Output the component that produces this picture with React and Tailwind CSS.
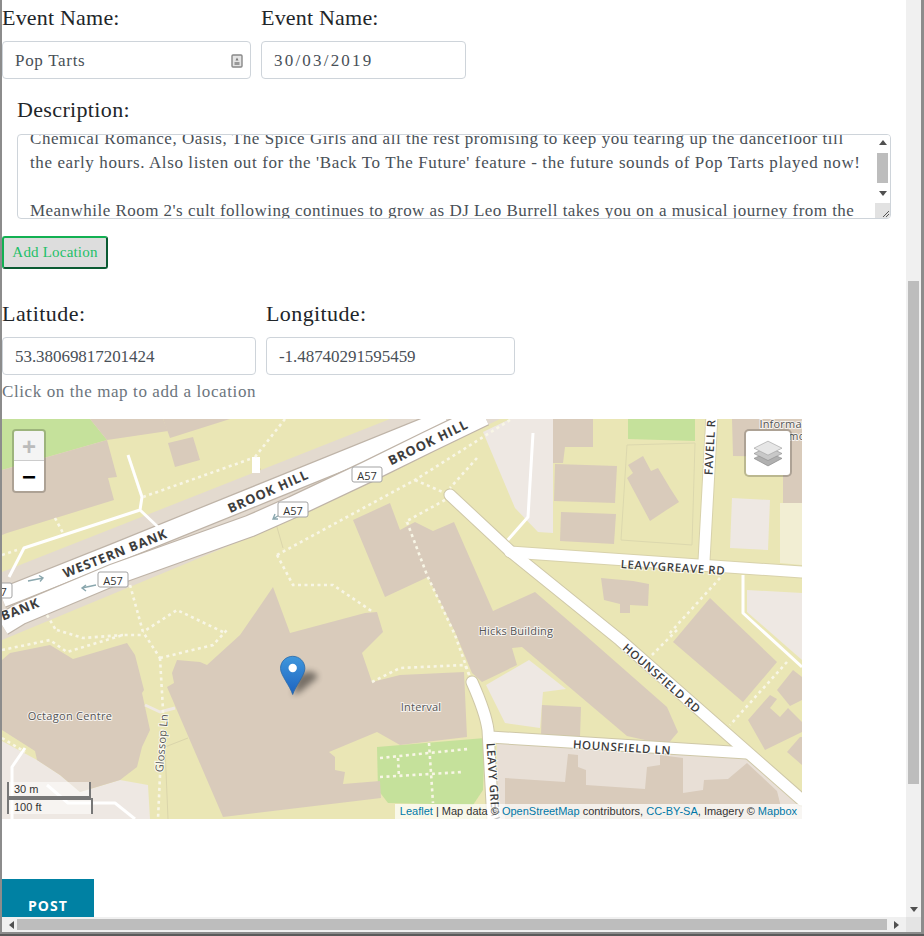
const serif = "font-['Liberation_Serif',serif]";

const dots = [
  "M143 497L253 458",
  "M255 457L285 419",
  "M55 518L63 533",
  "M2 555L17 550",
  "M2 650L50 640L67 652L123 635L143 635",
  "M57 630L83 638L123 635",
  "M47 615L57 632",
  "M223 632L177 610L143 632",
  "M130 585L143 632L160 658",
  "M160 658L213 645L227 630",
  "M160 658L163 710L158 819",
  "M277 555L293 585L333 585L373 612",
  "M277 555L415 480L510 420",
  "M372 682L400 668L465 665L470 677",
  "M407 522L427 575L455 635L470 677",
  "M477 458L450 488",
  "M415 480L445 493",
  "M445 500L405 522",
  "M380 758L468 749",
  "M380 777L463 772",
  "M429 743L433 803",
  "M398 758L399 777",
  "M720 578L668 635",
  "M677 630L652 655",
  "M787 662L730 725",
  "M2 738L25 752",
];

const buildings = [
  "2,470 107,440 117,477 108,478 114,500 7,533 2,535",
  "90,419 163,419 168,431 107,440",
  "163,419 230,419 170,438",
  "168,443 193,437 200,460 175,467",
  "353,520 390,503 400,530 415,522 433,531 454,522 493,611 535,592 585,635 667,707 678,732 667,745 627,736 522,647 512,648 517,665 482,682 472,673 455,632 428,577 385,597",
  "240,635 273,587 290,633 365,613 377,612 383,632 362,653 372,682 400,675 464,672 467,737 400,745 377,732 329,752 335,757 335,770 345,772 343,784 380,781 381,798 223,817 167,687 174,683 172,673 177,660 200,662 207,665",
  "2,660 10,653 50,645 73,659 127,643 135,655 144,690 142,693 150,730 142,747 137,767 120,780 80,792 60,775 37,760 35,751 2,730",
  "553,419 593,419 593,447 565,447 563,463 553,463",
  "555,464 617,466 615,503 554,501",
  "561,512 616,514 614,544 560,541",
  "628,465 643,456 651,471 658,468 670,488 679,502 665,511 650,521 627,478 633,473",
  "732,419 802,419 802,503 783,503 783,457 733,456",
  "601,578 633,581 649,584 648,606 630,605 630,613 620,613 620,604 604,600",
  "673,642 710,598 777,662 743,702",
  "542,705 581,707 580,737 541,735",
  "777,690 793,670 802,677 802,700 790,706",
  "748,720 770,695 777,699 770,708 780,717 788,708 802,722 802,732 765,750",
  "787,752 800,737 802,737 802,765",
  "505,778 565,782 568,754 578,755 578,767 586,770 586,785 645,789 647,767 660,765 660,755 683,758 683,793 703,790 704,780 728,779 747,763 777,791 780,803 780,819 505,819",
];

const pale = [
  "510,419 553,419 553,533 538,532 515,508 483,432",
  "732,498 770,500 768,550 730,548",
  "747,590 802,593 802,660 747,612",
  "2,741 37,760 60,775 80,792 120,780 148,785 150,819 2,819",
  "529,660 566,689 543,692 540,728 505,723 486,685",
];

const shields = [
  [367, 474],
  [293, 509],
  [113, 579],
  [-3, 590],
];

function MapLabel({ x, y, angle, children, weight = 700, size = 13, fill = "#3d3d3d", spacing = 0.8, anchor = "middle" }) {
  return (
    <text
      x={x}
      y={y}
      transform={`rotate(${angle} ${x} ${y})`}
      textAnchor={anchor}
      dominantBaseline="central"
      fontFamily="'Open Sans', sans-serif"
      fontSize={size}
      fontWeight={weight}
      letterSpacing={spacing}
      fill={fill}
      stroke="#ffffff"
      strokeWidth="2"
      strokeOpacity="0.75"
      paintOrder="stroke"
    >
      {children}
    </text>
  );
}

function StreetMap() {
  return (
    <svg viewBox="2 419 800 400" className="block w-[800px] h-[400px]">
      <defs>
        <linearGradient id="pin" x1="0" y1="0" x2="0" y2="1">
          <stop offset="0" stopColor="#3f97dc" />
          <stop offset="1" stopColor="#1d63c0" />
        </linearGradient>
        <filter id="pinShadow" x="-50%" y="-50%" width="200%" height="200%">
          <feGaussianBlur stdDeviation="3" />
        </filter>
      </defs>
      <rect x="2" y="419" width="800" height="400" fill="#eae6b5" />
      <polygon points="2,419 90,419 107,440 2,470" fill="#c5e19b" />
      <polygon points="628,419 695,419 695,441 628,439" fill="#c5e19b" />
      <polygon points="377,747 485,738 483,790 473,805 388,803 378,790" fill="#c5e19b" />
      <polygon points="780,503 802,503 802,565 780,563" fill="#f2eed3" />
      <polygon points="497,743 748,758 802,800 802,819 497,819" fill="#e8dfd6" />
      {pale.map((p) => (
        <polygon key={p} points={p} fill="#eee8e3" />
      ))}
      {buildings.map((p) => (
        <polygon key={p} points={p} fill="#d9cbbb" />
      ))}
      <path d="M627 445L695 443L692 545L621 540Z" fill="none" stroke="#dcd8ae" />
      <path d="M260 468L283 548M165 747L188 738M165 747L168 819" fill="none" stroke="#dad5ab" />

      {/* dual carriageway */}
      <polygon points="2,572 390,419 500,419 296,517 250,537 2,640" fill="#e3dacf" />
      <g fill="none" strokeLinejoin="round">
        <path d="M2 598L115 553L268 491L446 419" stroke="#bfb4a8" strokeWidth="21" />
        <path d="M2 598L115 553L268 491L446 419" stroke="#ffffff" strokeWidth="18.5" />
        <path d="M2 625L20 614L113 575L250 526L293 507L367 472L428 442L484 415" stroke="#bfb4a8" strokeWidth="23" />
        <path d="M2 625L20 614L113 575L250 526L293 507L367 472L428 442L484 415" stroke="#ffffff" strokeWidth="20.5" />
      </g>

      {/* minor roads */}
      <g fill="none" stroke="#ffffff" strokeLinejoin="round">
        <path d="M128 455L142 497L140 510L24 548L9 577M140 510L158 527" strokeWidth="3" />
        <path d="M533 433L528 517L506 542" strokeWidth="3" />
        <path d="M743 575L743 613L802 667" strokeWidth="3" />
        <path d="M25 748L12 767L12 819M47 785L68 803L115 803L135 819" strokeWidth="3" />
        <path d="M145 705L160 712L175 708" strokeWidth="3" stroke="#efe9e2" />
        <path d="M256 457L256 473" strokeWidth="8" />
      </g>
      <g fill="none" strokeLinecap="round" strokeLinejoin="round">
        <path d="M712 415L704 561" stroke="#d8d2ab" strokeWidth="13" />
        <path d="M510 552L802 572" stroke="#d8d2ab" strokeWidth="13" />
        <path d="M450 495L510 551L620 640L802 800" stroke="#cfc8a8" strokeWidth="13" />
        <path d="M472 682C480 700 486 715 488 730L493 822" stroke="#cfc8a8" strokeWidth="13" />
        <path d="M490 737L747 753" stroke="#cfc8a8" strokeWidth="13" />
        <path d="M712 415L704 561" stroke="#ffffff" strokeWidth="11" />
        <path d="M510 552L802 572" stroke="#ffffff" strokeWidth="11" />
        <path d="M450 495L510 551L620 640L802 800" stroke="#ffffff" strokeWidth="11" />
        <path d="M472 682C480 700 486 715 488 730L493 822" stroke="#ffffff" strokeWidth="11" />
        <path d="M490 737L747 753" stroke="#ffffff" strokeWidth="11" />
      </g>

      <g fill="none" stroke="#f8f6e6" strokeWidth="2.6" strokeDasharray="3 3.5">
        {dots.map((d) => (
          <path key={d} d={d} />
        ))}
      </g>

      {/* one-way arrows */}
      <g fill="none" stroke="#8aa7ae" strokeWidth="1.4">
        <path d="M28 581L43 578M39 575.5L43 578L40 581.5" />
        <path d="M96 585L82 588M86 585L82 588L86 591" />
        <path d="M281 514L273 519M275 514L273 519L278 519" />
      </g>

      {shields.map(([x, y]) => (
        <g key={x}>
          <rect x={x - 15} y={y - 7} width="30" height="15" rx="2" fill="#ffffff" stroke="#a3a3a3" />
          <text x={x} y={y + 1} textAnchor="middle" dominantBaseline="central" fontFamily="'Open Sans', sans-serif" fontSize="11" fill="#333333">
            A57
          </text>
        </g>
      ))}

      <MapLabel x={115} y={553} angle={-21.5}>WESTERN BANK</MapLabel>
      <MapLabel x={268} y={491} angle={-24}>BROOK HILL</MapLabel>
      <MapLabel x={428} y={442} angle={-26}>BROOK HILL</MapLabel>
      <MapLabel x={20} y={609} angle={-21}>BANK</MapLabel>
      <MapLabel x={708} y={475} angle={-87} anchor="start" size={11.5} spacing={0.7} weight={600}>FAVELL RD</MapLabel>
      <MapLabel x={673} y={567} angle={3.7} size={11.5} spacing={0.6} weight={600}>LEAVYGREAVE RD</MapLabel>
      <MapLabel x={662} y={678} angle={41} size={11.5} spacing={0.6} weight={600}>HOUNSFIELD RD</MapLabel>
      <MapLabel x={622} y={747} angle={3.7} size={11.5} spacing={0.6} weight={600}>HOUNSFIELD LN</MapLabel>
      <MapLabel x={491} y={743} angle={86} anchor="start" size={11.5} spacing={0.7} weight={600}>LEAVY GREAVE</MapLabel>
      <MapLabel x={161} y={743} angle={-85} weight={400} size={11} spacing={0.2} fill="#555555">Glossop Ln</MapLabel>
      <MapLabel x={70} y={715} angle={0} weight={400} size={11} spacing={0.3} fill="#555555">Octagon Centre</MapLabel>
      <MapLabel x={516} y={630} angle={0} weight={400} size={11} spacing={0.2} fill="#555555">Hicks Building</MapLabel>
      <MapLabel x={421} y={706} angle={0} weight={400} size={11} spacing={0.2} fill="#555555">Interval</MapLabel>
      <MapLabel x={791} y={423} angle={0} weight={400} size={11} spacing={0.2} fill="#555555">Information</MapLabel>
      <MapLabel x={791} y={435} angle={0} weight={400} size={11} spacing={0.2} fill="#555555">Commons</MapLabel>

      {/* marker */}
      <path d="M293 695L300 692L317 678C319 674 312 670 305 672L297 675Z" fill="#000000" opacity="0.45" filter="url(#pinShadow)" />
      <path
        d="M292.7 694.5C290 686 280.5 675 280.5 668.5C280.5 661.5 286 656.3 292.7 656.3C299.4 656.3 304.9 661.5 304.9 668.5C304.9 675 295.4 686 292.7 694.5Z"
        fill="url(#pin)"
        stroke="#2a6aa8"
        strokeWidth="0.8"
      />
      <circle cx="292.7" cy="668" r="4.2" fill="#ffffff" />
    </svg>
  );
}

function Field({ className, children }) {
  return (
    <div className={`h-[38px] flex items-center justify-between pl-[12px] pr-[5px] pt-[1px] border border-[#ced4da] rounded-[4px] bg-white text-[17px] text-[#495057] ${className}`}>
      {children}
    </div>
  );
}

function Label({ className = "", children }) {
  return <div className={`text-[22px] leading-[26px] tracking-[0.2px] text-[#212529] ${className}`}>{children}</div>;
}

export default function App() {
  return (
    <div className={`h-[936px] w-[924px] flex flex-col overflow-hidden bg-white ${serif}`}>
      <div className="flex flex-1 min-h-0">
        <div className="w-[2px] bg-[#8c8c8c]" />
        <main className="w-[904px] overflow-hidden">
          <div className="flex gap-[10px] pt-[5px]">
            <div className="w-[249px]">
              <Label>Event Name:</Label>
              <Field className="mt-[10px]">
                <span className="tracking-[0.7px]">Pop Tarts</span>
                <svg width="12" height="14" viewBox="0 0 12 14" className="mr-[2px]">
                  <rect x="1" y="1" width="10" height="12" rx="1" fill="#e4e4e4" stroke="#888888" strokeWidth="1.4" />
                  <path d="M6 3.5L7.5 6.5H4.5Z" fill="#777777" />
                  <rect x="3.5" y="8" width="5" height="3" fill="#999999" />
                </svg>
              </Field>
            </div>
            <div className="w-[205px]">
              <Label>Event Name:</Label>
              <Field className="mt-[10px]">
                <span className="tracking-[2.2px]">30/03/2019</span>
              </Field>
            </div>
          </div>

          <div className="pl-[15px] mt-[18px]">
            <Label className="tracking-[0.35px]">Description:</Label>
            <div className="mt-[11px] w-[874px] h-[85px] flex border border-[#ced4da] rounded-[4px] overflow-hidden">
              <div className="flex-1 min-w-0 pl-[12px] overflow-hidden text-[17px] leading-[24px] tracking-[0.61px] text-[#495057] whitespace-nowrap">
                <div className="-mt-[8px] tracking-[0.55px]">Chemical Romance, Oasis, The Spice Girls and all the rest promising to keep you tearing up the dancefloor till</div>
                <div>the early hours. Also listen out for the 'Back To The Future' feature - the future sounds of Pop Tarts played now!</div>
                <div className="h-[24px]" />
                <div className="tracking-[0.47px]">Meanwhile Room 2's cult following continues to grow as DJ Leo Burrell takes you on a musical journey from the</div>
              </div>
              <div className="w-[15px] flex flex-col items-center bg-white">
                <div className="h-[15px] flex items-center justify-center text-[#505050]">
                  <svg width="8" height="5" viewBox="0 0 8 5"><path d="M4 0L8 5H0Z" fill="currentColor" /></svg>
                </div>
                <div className="w-[11px] h-[30px] bg-[#bdbdbd] mt-[3px]" />
                <div className="flex-1 flex items-center justify-center text-[#505050]">
                  <svg width="8" height="5" viewBox="0 0 8 5"><path d="M4 5L8 0H0Z" fill="currentColor" /></svg>
                </div>
                <div className="w-[15px] h-[15px] bg-[#e2e2e2] flex items-end justify-end">
                  <svg width="10" height="10" viewBox="0 0 10 10"><path d="M9 3L3 9M9 6L6 9" stroke="#555555" /></svg>
                </div>
              </div>
            </div>
          </div>

          <button className="block mt-[17px] w-[106px] h-[33px] border-2 border-[#12b052] border-r-[#0a5a32] border-b-[#0a5a32] rounded-[3px] bg-[#dddddd] text-[15px] tracking-[0.2px] text-[#22c068]">
            Add Location
          </button>

          <div className="flex gap-[10px] mt-[32px]">
            <div className="w-[254px]">
              <Label className="tracking-[0.45px]">Latitude:</Label>
              <Field className="mt-[10px]">
                <span className="tracking-[-0.05px]">53.38069817201424</span>
              </Field>
            </div>
            <div className="w-[249px]">
              <Label className="tracking-[0.4px]">Longitude:</Label>
              <Field className="mt-[10px]">
                <span className="tracking-[-0.05px]">-1.48740291595459</span>
              </Field>
            </div>
          </div>
          <p className="mt-[5px] text-[17px] leading-[24px] tracking-[0.6px] text-[#6c757d]">Click on the map to add a location</p>

          <div className="relative w-[800px] h-[400px] mt-[15px] overflow-hidden">
            <StreetMap />
            <div className="absolute left-[10px] top-[10px] w-[34px] border-2 border-black/20 rounded-[4px] font-['Liberation_Sans',sans-serif] font-bold text-[24px] leading-[31px] text-center bg-clip-padding">
              <div className="h-[30px] bg-[#f4f4f4] text-[#bbbbbb] border-b border-[#cccccc] rounded-t-[2px]">+</div>
              <div className="h-[30px] bg-white text-black rounded-b-[2px]">−</div>
            </div>
            <div className="absolute left-[742px] top-[10px] w-[48px] h-[48px] border-2 border-black/20 rounded-[5px] bg-white bg-clip-padding flex items-center justify-center">
              <svg width="28" height="28" viewBox="0 0 26 26">
                <path d="M13 12L26 18L13 25L0 18Z" fill="#b0b0b0" stroke="#888888" strokeWidth="0.6" />
                <path d="M13 7L26 13.5L13 20L0 13.5Z" fill="#c8c8c8" stroke="#8f8f8f" strokeWidth="0.6" />
                <path d="M13 2L26 8.5L13 15L0 8.5Z" fill="#e6e6e6" stroke="#a0a0a0" strokeWidth="0.6" />
              </svg>
            </div>
            <div className="absolute left-[5px] bottom-[5px] font-['Liberation_Sans',sans-serif] text-[11px] leading-[14px] text-[#333333]">
              <div className="w-[84px] h-[16px] border-2 border-t-0 border-[#777777] bg-white/50 pl-[5px]">30 m</div>
              <div className="w-[86px] h-[16px] border-2 border-b-0 border-[#777777] bg-white/50 pl-[5px]">100 ft</div>
            </div>
            <div className="absolute right-0 bottom-0 h-[15px] px-[5px] bg-white/70 font-['Liberation_Sans',sans-serif] text-[11px] leading-[15px] text-[#333333] whitespace-nowrap">
              <span className="text-[#0078a8]">Leaflet</span> | Map data © <span className="text-[#0078a8]">OpenStreetMap</span> contributors, <span className="text-[#0078a8]">CC-BY-SA</span>, Imagery © <span className="text-[#0078a8]">Mapbox</span>
            </div>
          </div>

          <button className="block mt-[60px] w-[92px] h-[60px] pb-[6px] bg-[#0081a3] font-['Open_Sans',sans-serif] font-bold text-[14px] leading-none tracking-[1.1px] text-white">
            POST
          </button>
        </main>

        {/* page scrollbar */}
        <div className="w-[15px] flex flex-col items-center bg-[#f0f0f0]">
          <div className="h-[281px] w-full" />
          <div className="w-[11px] h-[503px] bg-[#bdbdbd]" />
          <div className="flex-1 w-full flex items-end justify-center pb-[5px] text-[#505050]">
            <svg width="8" height="5" viewBox="0 0 8 5"><path d="M4 5L8 0H0Z" fill="currentColor" /></svg>
          </div>
        </div>
        <div className="w-[3px] bg-[#8c8c8c]" />
      </div>

      <div className="flex h-[15px]">
        <div className="w-[2px] bg-[#8c8c8c]" />
        <div className="w-[904px] flex items-center bg-[#f0f0f0]">
          <div className="w-[15px] flex justify-end pr-[3px] text-[#505050]">
            <svg width="5" height="8" viewBox="0 0 5 8"><path d="M0 4L5 0V8Z" fill="currentColor" /></svg>
          </div>
          <div className="w-[870px] h-[11px] bg-[#bdbdbd]" />
          <div className="flex-1 flex justify-center text-[#505050]">
            <svg width="5" height="8" viewBox="0 0 5 8"><path d="M5 4L0 0V8Z" fill="currentColor" /></svg>
          </div>
        </div>
        <div className="w-[15px] bg-[#e4e4e4]" />
        <div className="w-[3px] bg-[#8c8c8c]" />
      </div>
      <div className="h-[2px] bg-[#8c8c8c]" />
      <div className="h-[2px] bg-[#5a5a5a]" />
    </div>
  );
}
